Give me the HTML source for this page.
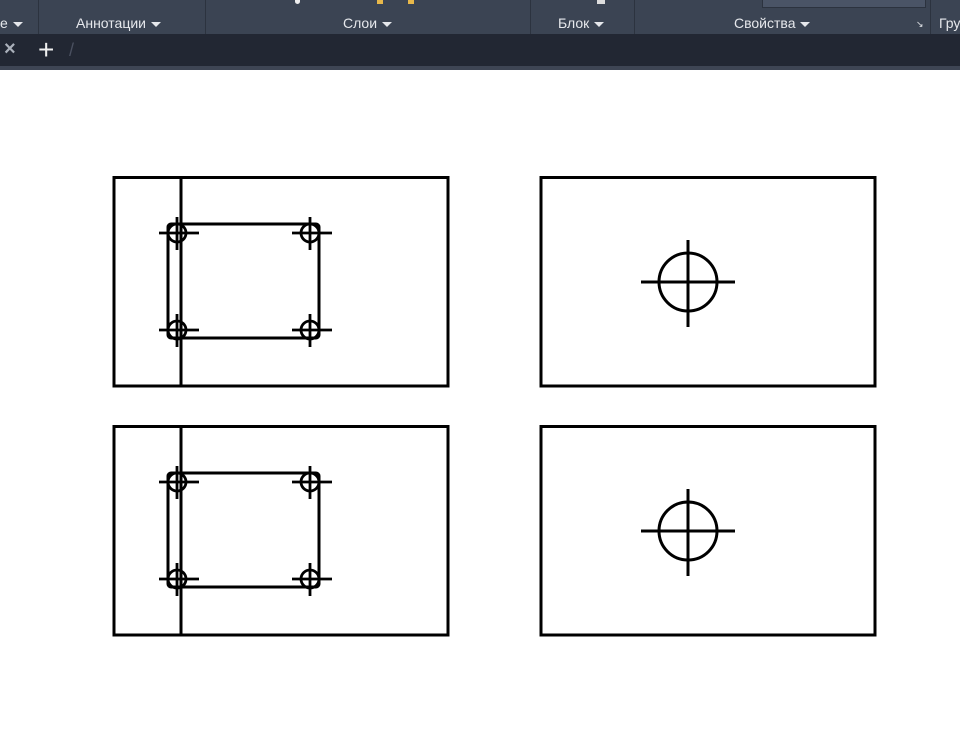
<!DOCTYPE html>
<html><head><meta charset="utf-8"><style>
body{margin:0;width:960px;height:755px;overflow:hidden;background:#fff;font-family:"Liberation Sans","DejaVu Sans",sans-serif}
.tb{position:absolute;left:0;top:0;width:960px;height:34px;background:#3b4453}
.tabs{position:absolute;left:0;top:34px;width:960px;height:32px;background:#222733}
.strip{position:absolute;left:0;top:66px;width:960px;height:4px;background:#3e4554}
.lbl{position:absolute;top:15px;color:#e6e8ec;font-size:14px}
.div{position:absolute;top:0;width:1px;height:34px;background:#2c333f}
.ar{display:inline-block;width:0;height:0;border-left:5px solid transparent;border-right:5px solid transparent;border-top:5px solid #e6e8ec;vertical-align:middle;margin-left:5px}
</style></head><body>
<div class="tb">
<div class="div" style="left:38px"></div><div class="div" style="left:205px"></div><div class="div" style="left:530px"></div><div class="div" style="left:634px"></div><div class="div" style="left:930px"></div>
<div class="lbl" style="left:0">е<span class="ar"></span></div>
<div class="lbl" style="left:76px">Аннотации<span class="ar"></span></div>
<div class="lbl" style="left:343px">Слои<span class="ar"></span></div>
<div class="lbl" style="left:558px">Блок<span class="ar"></span></div>
<div class="lbl" style="left:734px">Свойства<span class="ar"></span></div>
<div class="lbl" style="left:916px;font-size:9px;top:19px">↘</div>
<div class="lbl" style="left:939px">Гру</div>
<div style="position:absolute;left:762px;top:0;width:162px;height:7px;background:#4a5466;border:1px solid #2c333f;border-top:none"></div>
<div style="position:absolute;left:295px;top:0;width:5px;height:4px;background:#eee;border-radius:0 0 3px 3px"></div>
<div style="position:absolute;left:377px;top:0;width:6px;height:4px;background:#e8b84a"></div>
<div style="position:absolute;left:408px;top:0;width:6px;height:4px;background:#e8b84a"></div>
<div style="position:absolute;left:597px;top:0;width:8px;height:4px;background:#ddd"></div>
</div>
<div class="tabs">
<div style="position:absolute;left:4px;top:4px;color:#aab0ba;font-size:20px;font-weight:bold">×</div>
<div style="position:absolute;left:38px;top:0px;color:#f0f0f0;font-size:28px">+</div>
<div style="position:absolute;left:69px;top:6px;color:#4a5060;font-size:18px">/</div>
</div>
<div class="strip"></div>
<svg width="960" height="755" style="position:absolute;left:0;top:0" fill="none" stroke="#000" stroke-width="3">
<g id="a">
<rect x="114" y="177.5" width="334" height="208.5"/>
<line x1="181" y1="177.5" x2="181" y2="386"/>
<rect x="168" y="224" width="151" height="114" rx="3"/>
<g stroke-width="2.8">
<circle cx="177" cy="233" r="9"/><line x1="159" y1="233" x2="199" y2="233"/><line x1="177" y1="217" x2="177" y2="250"/>
<circle cx="310" cy="233" r="9"/><line x1="292" y1="233" x2="332" y2="233"/><line x1="310" y1="217" x2="310" y2="250"/>
<circle cx="177" cy="330" r="9"/><line x1="159" y1="330" x2="199" y2="330"/><line x1="177" y1="314" x2="177" y2="347"/>
<circle cx="310" cy="330" r="9"/><line x1="292" y1="330" x2="332" y2="330"/><line x1="310" y1="314" x2="310" y2="347"/>
</g>
<rect x="541" y="177.5" width="334" height="208.5"/>
<circle cx="688" cy="282" r="29"/><line x1="641" y1="282" x2="735" y2="282"/><line x1="688" y1="240" x2="688" y2="327"/>
</g>
<use href="#a" y="249"/>
</svg>
</body></html>
